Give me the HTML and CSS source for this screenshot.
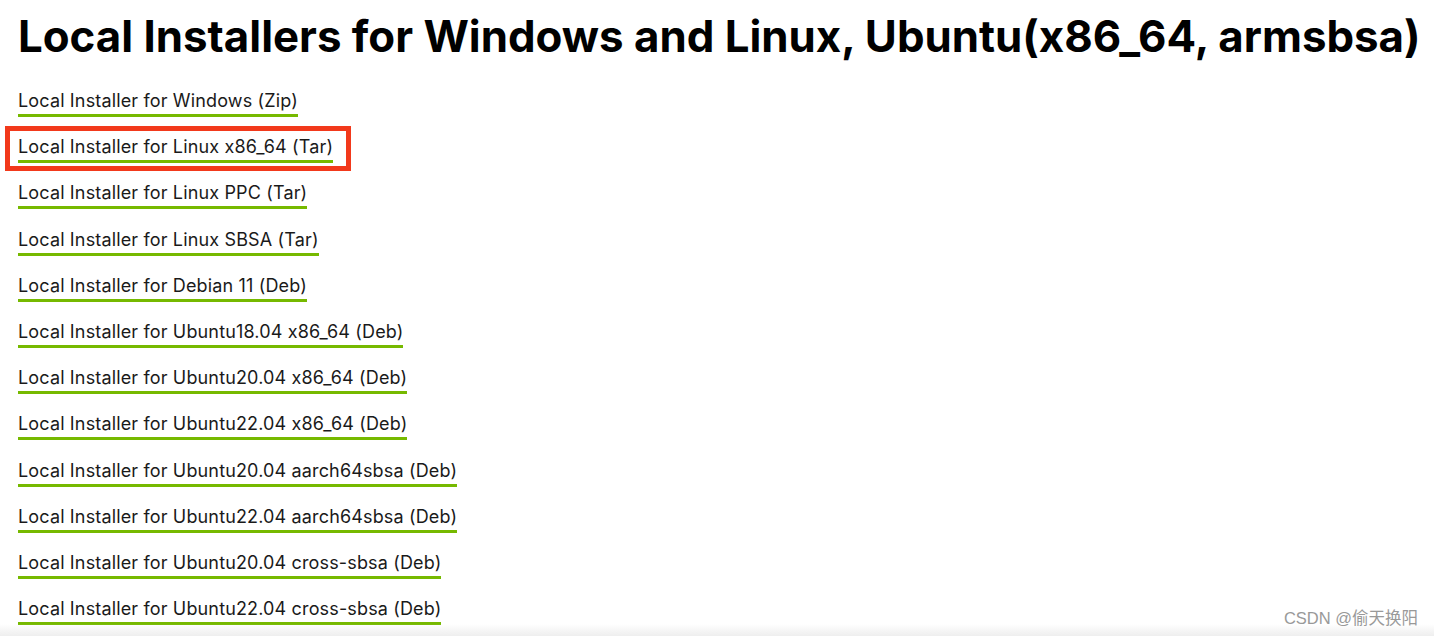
FILE: index.html
```html
<!DOCTYPE html>
<html>
<head>
<meta charset="utf-8">
<link rel="stylesheet" href="styles.css">
</head>
<body>
<div class="page">
  <h1 class="title">Local Installers for Windows and Linux, Ubuntu(x86_64, armsbsa)</h1>
  <ul class="list">
    <li class="item"><a class="link" href="#">Local Installer for Windows (Zip)</a></li>
    <li class="item item-hl"><a class="link" href="#">Local Installer for Linux x86_64 (Tar)</a></li>
    <li class="item"><a class="link" href="#">Local Installer for Linux PPC (Tar)</a></li>
    <li class="item"><a class="link" href="#">Local Installer for Linux SBSA (Tar)</a></li>
    <li class="item"><a class="link" href="#">Local Installer for Debian 11 (Deb)</a></li>
    <li class="item"><a class="link" href="#">Local Installer for Ubuntu18.04 x86_64 (Deb)</a></li>
    <li class="item"><a class="link" href="#">Local Installer for Ubuntu20.04 x86_64 (Deb)</a></li>
    <li class="item"><a class="link" href="#">Local Installer for Ubuntu22.04 x86_64 (Deb)</a></li>
    <li class="item"><a class="link" href="#">Local Installer for Ubuntu20.04 aarch64sbsa (Deb)</a></li>
    <li class="item"><a class="link" href="#">Local Installer for Ubuntu22.04 aarch64sbsa (Deb)</a></li>
    <li class="item"><a class="link" href="#">Local Installer for Ubuntu20.04 cross-sbsa (Deb)</a></li>
    <li class="item"><a class="link" href="#">Local Installer for Ubuntu22.04 cross-sbsa (Deb)</a></li>
  </ul>
</div>
<div class="fade"></div>
<div class="watermark">CSDN @偷天换阳</div>
</body>
</html>
```
FILE: styles.css
```css
html, body {
  margin: 0;
  padding: 0;
  background: #fff;
  overflow: hidden;
}
body {
  width: 1434px;
  height: 636px;
  position: relative;
  font-family: Inter, "Noto Sans", sans-serif;
  font-feature-settings: "calt" 0;
}
.page {
  padding: 11px 0 0 18px;
}
.title {
  margin: 0;
  font-size: 43.8px;
  font-weight: 700;
  line-height: 52px;
  color: #000;
  white-space: nowrap;
}
.list {
  list-style: none;
  margin: 0;
  padding: 0;
  margin-top: 27px;
  display: flex;
  flex-direction: column;
}
.item {
  height: 46.2px;
}
.link {
  display: inline-block;
  font-size: 18px;
  letter-spacing: 0.15px;
  line-height: 22px;
  color: #1a1a1a;
  text-decoration: none;
  padding-bottom: 2px;
  border-bottom: 3px solid #76b900;
}
.item-hl {
  position: relative;
}
.item-hl::before {
  content: "";
  position: absolute;
  left: -13px;
  top: -10px;
  width: 336px;
  height: 35px;
  border: 5px solid #f2391b;
}
.fade {
  position: absolute;
  left: 0;
  right: 0;
  bottom: 0;
  height: 12px;
  background: linear-gradient(to bottom, rgba(240,240,240,0), #eeeeee);
}
.watermark {
  position: absolute;
  right: 16px;
  bottom: 7px;
  font-family: "Liberation Sans", "Noto Sans CJK SC", sans-serif;
  font-size: 16.5px;
  color: #999;
}
```
